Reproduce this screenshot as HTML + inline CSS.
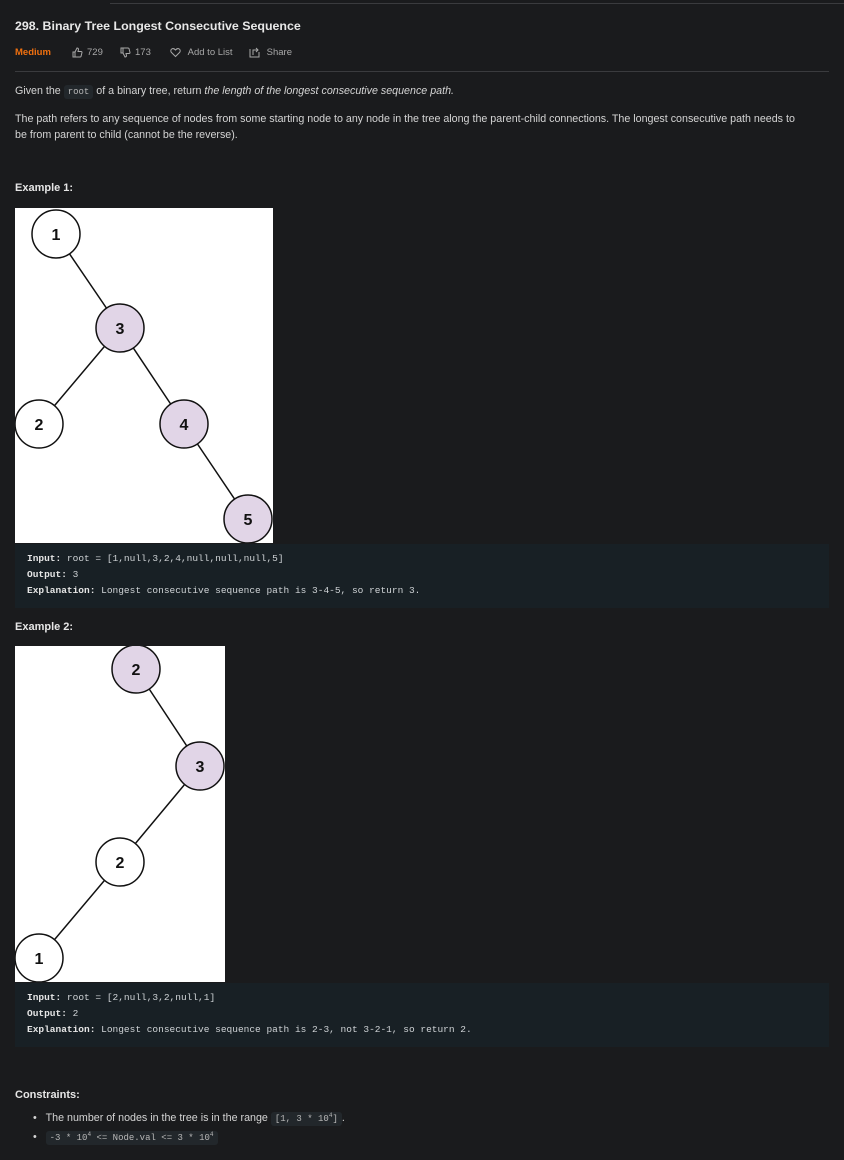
<!DOCTYPE html>
<html><head><meta charset="utf-8"><style>
html,body{margin:0;padding:0;background:#1a1b1d;width:844px;height:1160px;overflow:hidden}
body{font-family:"Liberation Sans",sans-serif;color:#d4d4d4;position:relative}
.abs{position:absolute}
code{font-family:"Liberation Mono",monospace;background:#22272b;color:#b8b8b8;font-size:9px;padding:2px 4px;border-radius:3px}
pre{position:absolute;left:15px;width:814px;background:#182025;margin:0;padding:0;font-family:"Liberation Mono",monospace;font-size:9.5px;color:#cfd3d6;line-height:16px}
pre b{color:#e6e6e6}
.h{font-weight:bold;font-size:11px;color:#e6e6e6}
.m{position:absolute;top:47px;font-size:9.5px;color:#a8a8a8;white-space:nowrap;display:flex;align-items:center;gap:4px}
.m svg{stroke:#a8a8a8;fill:none;stroke-width:1}
</style></head><body>
<div class="abs" style="left:110px;top:3px;width:734px;height:1px;background:#3a3b3e"></div>
<div class="abs" style="left:15px;top:19px;font-size:12.4px;font-weight:bold;color:#e8e8e8">298. Binary Tree Longest Consecutive Sequence</div>
<div class="m" style="left:15px;color:#f0700f;font-weight:bold">Medium</div>
<div class="m" style="left:72px"><svg width="11" height="11" viewBox="0 0 11 11"><path d="M1 5h2v5H1zM3 5l2-4c1 0 1.5.5 1.5 1.5L6 4.5h3c.7 0 1 .5 1 1L9 9.5c-.2.4-.5.5-1 .5H3"/></svg>729</div>
<div class="m" style="left:120px"><svg width="11" height="11" viewBox="0 0 11 11"><path d="M1 1h2v5H1zM3 6l2 4c1 0 1.5-.5 1.5-1.5L6 6.5h3c.7 0 1-.5 1-1L9 1.5C8.8 1.1 8.5 1 8 1H3"/></svg>173</div>
<div class="m" style="left:170px"><svg width="11" height="11" viewBox="0 0 11 11"><path d="M5.5 9.5L1.5 5.5C.5 4.5.5 2.5 2 1.8c1.3-.6 2.5 0 3.5 1.2 1-1.2 2.2-1.8 3.5-1.2 1.5.7 1.5 2.7.5 3.7z"/></svg>&nbsp;Add to List</div>
<div class="m" style="left:249px"><svg width="11" height="11" viewBox="0 0 11 11"><path d="M1 2v8h9V5M4 8V3h5M7 1l2 2-2 2"/></svg>&nbsp;Share</div>
<div class="abs" style="left:15px;top:71px;width:814px;height:1px;background:#3a3b3e"></div>
<div class="abs" style="left:15px;top:85px;font-size:10.7px">Given the <code>root</code> of a binary tree, return <i>the length of the longest consecutive sequence path.</i></div>
<div class="abs" style="left:15px;top:111px;width:790px;font-size:10.7px;line-height:16px">The path refers to any sequence of nodes from some starting node to any node in the tree along the parent-child connections. The longest consecutive path needs to be from parent to child (cannot be the reverse).</div>
<div class="abs h" style="left:15px;top:182px">Example 1:</div>
<svg class="abs" style="left:15px;top:208px" width="258" height="335">
<rect width="258" height="335" fill="#fff"/>
<g stroke="#111" stroke-width="1.5">
<line x1="41" y1="26" x2="105" y2="120"/><line x1="105" y1="120" x2="24" y2="216"/><line x1="105" y1="120" x2="169" y2="216"/><line x1="169" y1="216" x2="233" y2="311"/>
<circle cx="41" cy="26" r="24" fill="#fff"/><circle cx="105" cy="120" r="24" fill="#e1d5e7"/><circle cx="24" cy="216" r="24" fill="#fff"/><circle cx="169" cy="216" r="24" fill="#e1d5e7"/><circle cx="233" cy="311" r="24" fill="#e1d5e7"/></g>
<g font-family="Liberation Sans" font-weight="bold" font-size="16" text-anchor="middle" fill="#111">
<text x="41" y="32">1</text><text x="105" y="126">3</text><text x="24" y="222">2</text><text x="169" y="222">4</text><text x="233" y="317">5</text></g></svg>
<pre style="top:544px;height:64px;padding-top:7px;box-sizing:border-box;padding-left:12px"><b>Input:</b> root = [1,null,3,2,4,null,null,null,5]
<b>Output:</b> 3
<b>Explanation:</b> Longest consecutive sequence path is 3-4-5, so return 3.</pre>
<div class="abs h" style="left:15px;top:621px">Example 2:</div>
<svg class="abs" style="left:15px;top:646px" width="210" height="336">
<rect width="210" height="336" fill="#fff"/>
<g stroke="#111" stroke-width="1.5">
<line x1="121" y1="23" x2="185" y2="120"/><line x1="185" y1="120" x2="105" y2="216"/><line x1="105" y1="216" x2="24" y2="312"/>
<circle cx="121" cy="23" r="24" fill="#e1d5e7"/><circle cx="185" cy="120" r="24" fill="#e1d5e7"/><circle cx="105" cy="216" r="24" fill="#fff"/><circle cx="24" cy="312" r="24" fill="#fff"/></g>
<g font-family="Liberation Sans" font-weight="bold" font-size="16" text-anchor="middle" fill="#111">
<text x="121" y="29">2</text><text x="185" y="126">3</text><text x="105" y="222">2</text><text x="24" y="318">1</text></g></svg>
<pre style="top:983px;height:64px;padding-top:7px;box-sizing:border-box;padding-left:12px"><b>Input:</b> root = [2,null,3,2,null,1]
<b>Output:</b> 2
<b>Explanation:</b> Longest consecutive sequence path is 2-3, not 3-2-1, so return 2.</pre>
<div class="abs h" style="left:15px;top:1089px">Constraints:</div>
<div class="abs" style="left:33px;top:1112px;font-size:10.7px">•&nbsp;&nbsp;&nbsp;The number of nodes in the tree is in the range <code>[1, 3 * 10<sup style="font-size:6px">4</sup>]</code>.</div>
<div class="abs" style="left:33px;top:1131px;font-size:10.7px">•&nbsp;&nbsp;&nbsp;<code>-3 * 10<sup style="font-size:6px">4</sup> &lt;= Node.val &lt;= 3 * 10<sup style="font-size:6px">4</sup></code></div>
</body></html>
